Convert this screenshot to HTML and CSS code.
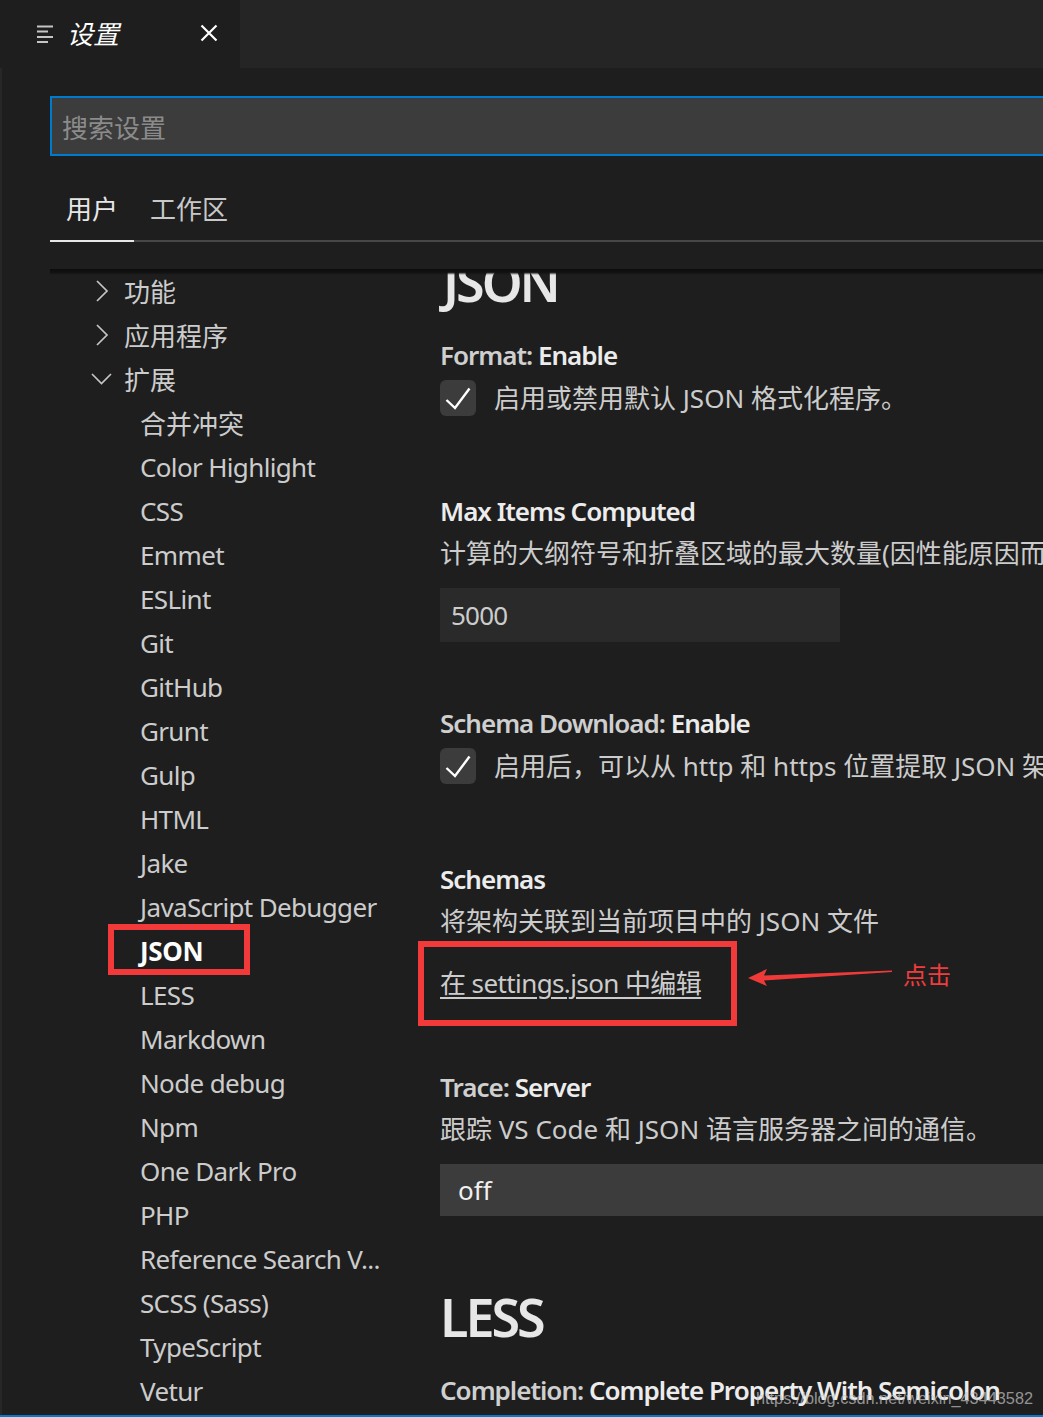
FILE: index.html
```html
<!DOCTYPE html>
<html lang="zh-CN">
<head>
<meta charset="utf-8">
<title>设置</title>
<link rel="stylesheet" href="styles.css">
</head>
<body>
<div class="window">
  <div class="tabbar">
    <div class="tab">
      <svg class="tab-icon" width="18" height="20" viewBox="0 0 18 20">
        <rect x="1" y="1.5" width="16" height="2" fill="#c5c5c5"/>
        <rect x="1" y="6.5" width="11" height="2" fill="#c5c5c5"/>
        <rect x="1" y="12" width="16" height="2" fill="#c5c5c5"/>
        <rect x="1" y="17" width="11" height="2" fill="#c5c5c5"/>
      </svg>
      <span class="tab-title">设置</span>
      <svg class="tab-close" width="18" height="18" viewBox="0 0 18 18">
        <path d="M1.5 1.5 L16.5 16.5 M16.5 1.5 L1.5 16.5" stroke="#ffffff" stroke-width="2.2" fill="none"/>
      </svg>
    </div>
  </div>

  <div class="editor">
    <div class="search"><span class="placeholder">搜索设置</span></div>
    <div class="scope-tabs">
      <span class="scope active">用户</span>
      <span class="scope">工作区</span>
    </div>

    <div class="body">
      <div class="shadow"></div>
      <nav class="tree">
        <div class="row group"><svg class="chev" width="26" height="26" viewBox="0 0 26 26"><path d="M9 3 L19 13 L9 23" /></svg><span>功能</span></div>
        <div class="row group"><svg class="chev" width="26" height="26" viewBox="0 0 26 26"><path d="M9 3 L19 13 L9 23" /></svg><span>应用程序</span></div>
        <div class="row group"><svg class="chev" width="26" height="26" viewBox="0 0 26 26"><path d="M4 8 L13.5 17.5 L23 8" /></svg><span>扩展</span></div>
        <div class="row leaf cjk">合并冲突</div>
        <div class="row leaf">Color Highlight</div>
        <div class="row leaf">CSS</div>
        <div class="row leaf">Emmet</div>
        <div class="row leaf">ESLint</div>
        <div class="row leaf">Git</div>
        <div class="row leaf">GitHub</div>
        <div class="row leaf">Grunt</div>
        <div class="row leaf">Gulp</div>
        <div class="row leaf">HTML</div>
        <div class="row leaf">Jake</div>
        <div class="row leaf">JavaScript Debugger</div>
        <div class="row leaf selected">JSON<span class="mark-box tree-mark"></span></div>
        <div class="row leaf">LESS</div>
        <div class="row leaf">Markdown</div>
        <div class="row leaf">Node debug</div>
        <div class="row leaf">Npm</div>
        <div class="row leaf">One Dark Pro</div>
        <div class="row leaf">PHP</div>
        <div class="row leaf">Reference Search V...</div>
        <div class="row leaf">SCSS (Sass)</div>
        <div class="row leaf">TypeScript</div>
        <div class="row leaf">Vetur</div>
      </nav>

      <main class="settings">
        <h2 class="group-title first">JSON</h2>

        <section class="item">
          <div class="item-title"><span class="cat">Format: </span>Enable</div>
          <div class="cb-row">
            <span class="checkbox"><svg width="36" height="36" viewBox="0 0 36 36"><path d="M6.5 20 L15 28 L29.5 8.5" stroke="#ffffff" stroke-width="2.4" fill="none"/></svg></span>
            <span class="cb-text">启用或禁用默认 JSON 格式化程序。</span>
          </div>
        </section>

        <section class="item">
          <div class="item-title">Max Items Computed</div>
          <div class="desc">计算的大纲符号和折叠区域的最大数量(因性能原因而受限)。</div>
          <div class="num-input">5000</div>
        </section>

        <section class="item">
          <div class="item-title"><span class="cat">Schema Download: </span>Enable</div>
          <div class="cb-row">
            <span class="checkbox"><svg width="36" height="36" viewBox="0 0 36 36"><path d="M6.5 20 L15 28 L29.5 8.5" stroke="#ffffff" stroke-width="2.4" fill="none"/></svg></span>
            <span class="cb-text">启用后，可以从 http 和 https 位置提取 JSON 架构。</span>
          </div>
        </section>

        <section class="item">
          <div class="item-title">Schemas</div>
          <div class="desc">将架构关联到当前项目中的 JSON 文件</div>
          <div class="link-wrap">
            <span class="link">在 settings.json 中编辑</span>
            <span class="mark-box link-mark"></span>
            <svg class="arrow" width="146" height="26" viewBox="0 0 146 26">
              <polygon points="0,13 19,4 16,10.5 144,5.5 144,7 16,15.5 19,21" fill="#f03a3a"/>
            </svg>
            <span class="click-note">点击</span>
          </div>
        </section>

        <section class="item">
          <div class="item-title"><span class="cat">Trace: </span>Server</div>
          <div class="desc">跟踪 VS Code 和 JSON 语言服务器之间的通信。</div>
          <div class="select">off</div>
        </section>

        <h2 class="group-title">LESS</h2>

        <section class="item">
          <div class="item-title"><span class="cat">Completion: </span>Complete Property With Semicolon</div>
          <div class="cb-row">
            <span class="checkbox"></span>
            <span class="cb-text">在完成 CSS 属性时在行尾插入分号</span>
          </div>
        </section>
      </main>
    </div>
  </div>

  <div class="statusline"></div>
  <div class="watermark">https://blog.csdn.net/weixin_43443582</div>
</div>
</body>
</html>
```

FILE: styles.css
```css
* {
  box-sizing: border-box;
  margin: 0;
  padding: 0;
}

html, body {
  width: 1043px;
  height: 1417px;
  overflow: hidden;
  background: #1e1e1e;
}

body {
  font-family: "Noto Sans", "Noto Sans CJK SC", sans-serif;
  font-size: 26px;
  color: #cccccc;
}

.window {
  position: relative;
  height: 1417px;
  display: flex;
  flex-direction: column;
  box-shadow: inset 2px 0 0 #272727;
}

/* ---------- editor tab bar ---------- */
.tabbar {
  height: 68px;
  flex: none;
  display: flex;
  background: #252526;
}

.tab {
  width: 240px;
  height: 68px;
  display: flex;
  align-items: center;
  padding: 0 22px 0 36px;
  background: #1e1e1e;
}

.tab-icon {
  margin-right: 13px;
  margin-top: 0;
}

.tab-title {
  font-style: italic;
  color: #ffffff;
  font-size: 26px;
  line-height: 1;
}

.tab-close {
  margin-left: auto;
  margin-top: -2px;
}

/* ---------- settings editor ---------- */
.editor {
  flex: 1;
  min-height: 0;
  display: flex;
  flex-direction: column;
  padding-left: 50px;
}

.search {
  flex: none;
  margin-top: 28px;
  width: 1100px;
  height: 60px;
  border: 2px solid #007acc;
  background: #3c3c3c;
  padding-left: 10px;
  line-height: 61px;
}

.placeholder {
  color: #8b8b8b;
}

.scope-tabs {
  flex: none;
  margin-top: 22px;
  width: 1100px;
  display: flex;
  border-bottom: 2px solid #474747;
}

.scope {
  height: 64px;
  line-height: 62px;
  padding: 0 16px;
  margin-bottom: -2px;
  color: #c8c8c8;
  border-bottom: 2px solid transparent;
}

.scope.active {
  color: #e7e7e7;
  border-bottom-color: #e7e7e7;
}

.body {
  position: relative;
  flex: 1;
  min-height: 0;
  margin-top: 27px;
  display: flex;
  overflow: hidden;
}

.shadow {
  position: absolute;
  top: 0;
  left: 0;
  width: 1100px;
  height: 6px;
  background: linear-gradient(#0c0c0c, #111111 55%, rgba(30, 30, 30, 0));
  z-index: 2;
}

/* ---------- tree ---------- */
.tree {
  width: 390px;
  flex: none;
}

.row {
  position: relative;
  height: 44px;
  display: flex;
  align-items: center;
  white-space: nowrap;
  color: #cccccc;
}

.row.group {
  padding-left: 38px;
}

.chev {
  margin-right: 10px;
}

.chev path {
  fill: none;
  stroke: #c5c5c5;
  stroke-width: 1.7;
}

.row.leaf {
  padding-left: 90px;
  letter-spacing: -0.65px;
}

.row.leaf.cjk {
  letter-spacing: 0;
}

.row.selected {
  color: #ffffff;
  font-weight: 700;
  letter-spacing: -0.3px;
}

.mark-box {
  position: absolute;
  border: 6px solid #f33a3a;
}

.tree-mark {
  left: 58px;
  top: -5px;
  width: 142px;
  height: 51px;
}

/* ---------- settings list ---------- */
.settings {
  flex: none;
  width: 800px;
  white-space: nowrap;
}

.group-title {
  font-size: 52px;
  font-weight: 600;
  line-height: 60px;
  letter-spacing: -3px;
  color: #e7e7e7;
  margin-top: 33px;
}

.group-title.first {
  margin-top: -17px;
  padding-left: 3px;
}

.item {
  padding: 23px 0 38px;
}

.item-title {
  line-height: 40px;
  font-weight: 600;
  letter-spacing: -1px;
  color: #ececec;
}

.cat {
  color: #cfcfcf;
}

.desc {
  line-height: 44px;
  color: #cccccc;
}

.cb-row {
  display: flex;
  align-items: center;
  gap: 18px;
  height: 36px;
  margin: 5px 0 14px;
}

.checkbox {
  width: 36px;
  height: 36px;
  flex: none;
  border-radius: 6px;
  background: #3c3c3c;
}

.checkbox svg {
  display: block;
}

.cb-text {
  color: #cccccc;
  margin-top: -3px;
}

.num-input {
  margin-top: 13px;
  width: 400px;
  height: 54px;
  line-height: 54px;
  padding-left: 11px;
  background: #2a2a2a;
  color: #cccccc;
  letter-spacing: -0.8px;
}

.link-wrap {
  position: relative;
  height: 44px;
  line-height: 44px;
  margin: 18px 0 1px;
}

.link {
  color: #cccccc;
  letter-spacing: -0.6px;
  text-decoration: underline;
  text-decoration-thickness: 2px;
  text-underline-offset: 4px;
}

.link-mark {
  left: -22px;
  top: -20px;
  width: 319px;
  height: 85px;
}

.arrow {
  position: absolute;
  left: 308px;
  top: 4px;
}

.click-note {
  position: absolute;
  left: 463px;
  top: 0;
  line-height: 28px;
  font-size: 24px;
  letter-spacing: 0;
  color: #f03c3c;
}

.select {
  margin-top: 13px;
  width: 800px;
  height: 52px;
  line-height: 52px;
  padding-left: 18px;
  background: #3c3c3c;
  color: #f0f0f0;
}

/* ---------- bottom ---------- */
.statusline {
  flex: none;
  height: 2px;
  background: #007acc;
}

.watermark {
  position: absolute;
  right: 10px;
  bottom: 9px;
  font-family: "Liberation Sans", Arial, sans-serif;
  font-size: 16.3px;
  line-height: 20px;
  color: rgba(200, 200, 200, 0.7);
  white-space: nowrap;
}
```
